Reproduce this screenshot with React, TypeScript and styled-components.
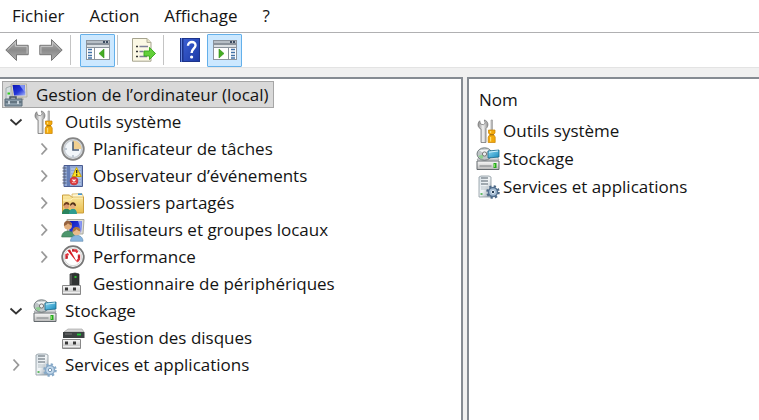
import React from "react";
import styled, { createGlobalStyle } from "styled-components";

const GlobalStyle = createGlobalStyle`
  * { box-sizing: border-box; }
  body { margin: 0; background: #fff; }
  body, button, table {
    font-family: "Open Sans", "Noto Sans", sans-serif;
    font-size: 17px;
    line-height: 24px;
    color: #141414;
  }
  button { margin: 0; padding: 0; border: 0; background: none; cursor: default; }
`;

const Window = styled.div`
  min-height: 100vh;
  display: flex;
  flex-direction: column;
  background: #f0f0f0;
`;

const MenuBar = styled.nav`
  display: flex;
  height: 33px;
  background: #fff;
  border-bottom: 1px solid #b0b0b2;
`;

const MenuItem = styled.button`
  padding: 0 13px 0 12px;
`;

const Toolbar = styled.div`
  display: flex;
  align-items: center;
  height: 35px;
  background: #fff;
  border-bottom: 1px solid #e3e3e3;
`;

const ToolButton = styled.button<{ $pressed?: boolean }>`
  width: ${(p) => (p.$pressed ? 35 : 34)}px;
  height: 33px;
  display: flex;
  align-items: center;
  justify-content: center;
  border: 1px solid ${(p) => (p.$pressed ? "#64b0ea" : "transparent")};
  border-radius: 1px;
  background: ${(p) => (p.$pressed ? "#cce8ff" : "transparent")};
`;

const Divider = styled.span`
  width: 1px;
  height: 30px;
  margin: 0 9px 0 2px;
  background: #c4c4c4;
`;

const Panes = styled.main`
  flex: 1;
  display: flex;
  gap: 4px;
  padding-top: 9px;
`;

const TreePane = styled.section`
  flex: 0 0 61%;
  padding: 2px 0;
  background: #fff;
  border-top: 2px solid #858b92;
  border-right: 2px solid #858b92;
`;

const ListPane = styled.section`
  flex: 1;
  padding: 6px 0 0 7px;
  background: #fff;
  border-top: 2px solid #858b92;
  border-left: 2px solid #858b92;
`;

const Tree = styled.ul`
  list-style: none;
  margin: 0;
  padding: 0;
`;

const Row = styled.div<{ $level: number }>`
  display: flex;
  align-items: center;
  height: 27px;
  padding-left: ${(p) => (p.$level ? p.$level * 28 - 23 : 2)}px;
`;

const Toggle = styled.button`
  display: flex;
  justify-content: center;
  width: 22px;
  margin-right: 6px;
`;

const ToggleSpace = styled.span`
  width: 28px;
`;

const Label = styled.button<{ $selected?: boolean }>`
  display: flex;
  align-items: center;
  gap: 8px;
  height: 27px;
  white-space: nowrap;
  ${(p) =>
    p.$selected &&
    `
      padding: 0 4px 0 1px;
      background: #d9d9d9;
      border: 1px solid #a6a6a6;
    `}
`;

const ItemTable = styled.table`
  border-collapse: collapse;
  th {
    height: 32px;
    padding: 0 0 2px 3px;
    text-align: left;
    font-weight: 400;
  }
  td { height: 28px; padding: 0; }
`;

const Item = styled.div`
  display: flex;
  align-items: center;
  gap: 3px;
  white-space: nowrap;
`;

const Glyph = styled.svg`
  display: block;
  flex: none;
`;

type IconProps = { children: React.ReactNode; width?: number; height?: number };
const Icon = ({ children, width = 24, height = 24 }: IconProps) => (
  <Glyph width={width} height={height} viewBox={`0 0 ${width} ${height}`} aria-hidden="true">
    {children}
  </Glyph>
);

const Gradients = () => (
  <Glyph width="0" height="0" aria-hidden="true">
    <defs>
      <linearGradient id="steel" x1="0" y1="0" x2="0" y2="1">
        <stop offset="0" stopColor="#b5b5b5" />
        <stop offset=".5" stopColor="#8b8b8b" />
        <stop offset="1" stopColor="#b0b0b0" />
      </linearGradient>
      <linearGradient id="metal" x1="0" y1="0" x2="1" y2="0">
        <stop offset="0" stopColor="#8c8c8c" />
        <stop offset=".5" stopColor="#f4f4f4" />
        <stop offset="1" stopColor="#8f8f8f" />
      </linearGradient>
      <linearGradient id="screen" x1="0" y1="0" x2="1" y2="1">
        <stop offset="0" stopColor="#0a16b4" />
        <stop offset=".55" stopColor="#2436d8" />
        <stop offset="1" stopColor="#a9b8fa" />
      </linearGradient>
      <linearGradient id="tower" x1="0" y1="0" x2="1" y2="1">
        <stop offset="0" stopColor="#d9e2e8" />
        <stop offset=".5" stopColor="#f2f5f7" />
        <stop offset="1" stopColor="#8d9aa5" />
      </linearGradient>
      <linearGradient id="help" x1="0" y1="0" x2="1" y2="1">
        <stop offset="0" stopColor="#3b5fd2" />
        <stop offset="1" stopColor="#1c3aa6" />
      </linearGradient>
      <linearGradient id="folder" x1="0" y1="0" x2="0" y2="1">
        <stop offset="0" stopColor="#fbe9a4" />
        <stop offset="1" stopColor="#e8bd4e" />
      </linearGradient>
      <linearGradient id="box" x1="0" y1="0" x2="0" y2="1">
        <stop offset="0" stopColor="#fafafa" />
        <stop offset="1" stopColor="#b9b9b9" />
      </linearGradient>
      <linearGradient id="cyan" x1="0" y1="0" x2="1" y2="1">
        <stop offset="0" stopColor="#8ed8f3" />
        <stop offset="1" stopColor="#168bbd" />
      </linearGradient>
    </defs>
  </Glyph>
);

const BackIcon = () => (
  <Icon>
    <path d="M.8 12 11.5 1.5v5.8h11.7v9.4H11.5v5.8Z" fill="url(#steel)" stroke="#777" />
    <path d="M2.5 12 10.4 4.2v4.2h11.7v7.2" fill="none" stroke="#c6c6c6" />
  </Icon>
);

const ForwardIcon = () => (
  <Icon>
    <path d="M23.2 12 12.5 1.5v5.8H.8v9.4h11.7v5.8Z" fill="url(#steel)" stroke="#777" />
    <path d="M21.5 12 13.6 4.2v4.2H1.9v7.2" fill="none" stroke="#c6c6c6" />
  </Icon>
);

const PaneIcon = ({ flipped }: { flipped?: boolean }) => (
  <Icon height={20}>
    <path d="M0 0h24v20H0z" fill="#8b939c" />
    <path d="M1 1h22v2H1z" fill="#b8bfc6" />
    <path d="M17 1h2v2h-2zM20 1h2v2h-2z" fill="#3b4b60" />
    <path d="M1 5h22v2H1z" fill="#dce0e3" />
    <path d={flipped ? "M1 8h14v11H1zM16 8h7v11h-7z" : "M1 8h7v11H1zM9 8h14v11H9z"} fill="#fff" />
    <path
      d={flipped ? "M18 9.5h4M18 12.5h4M18 15.5h4M18 18h4" : "M2 9.5h4M2 12.5h4M2 15.5h4M2 18h4"}
      stroke="#4272a6"
      strokeWidth="1.4"
    />
    <path d={flipped ? "m6 9 5 4.5L6 18Z" : "m18 9-5 4.5 5 4.5Z"} fill="#45ad24" stroke="#318f16" strokeWidth=".6" />
  </Icon>
);

const ExportIcon = () => (
  <Icon>
    <path d="M.5.5H15l4 4v18.7H.5Z" fill="#fbf8e4" stroke="#a5a38e" />
    <path d="M15 .5v4h4" fill="#e8e3c6" stroke="#b1ae98" />
    <path d="M4 8.5h2M4 13.5h2M4 18.5h2" stroke="#333" strokeWidth="1.6" />
    <path d="M7.5 8.5H16M7.5 13.5h4M7.5 18.5H15" stroke="#7d7f98" strokeWidth="1.4" />
    <path d="M12 13h5.5V9.4l6 6.1-6 6V18H12Z" fill="#62cf38" stroke="#35a61d" strokeWidth=".9" />
  </Icon>
);

const HelpIcon = () => (
  <Icon width={20}>
    <path d="M0 0h20v24H0z" fill="#1d348b" />
    <path d="M3.5 1H19v22H3.5z" fill="url(#help)" />
    <path d="M1.5 0v24" stroke="#6688df" />
    <path d="M8 7.8C8 2.6 16 2.8 15.5 7.6 15.2 10.7 11.6 11 11.6 15" fill="none" stroke="#fff" strokeWidth="2.4" />
    <circle cx="11.6" cy="19" r="1.6" fill="#fff" />
  </Icon>
);

const ComputerIcon = () => (
  <Icon>
    <path d="M2 5 7 3v13l-5 1Z" fill="#d5dddf" stroke="#8e999b" strokeWidth=".7" />
    <path d="M3.5 10.5h2.5" stroke="#33cc20" strokeWidth="2" />
    <path d="M7 1h15.5L23 14H9Z" fill="#dedbd0" stroke="#aaa798" strokeWidth=".8" />
    <path d="M8.5 2h12.2l.7 10.5H10Z" fill="url(#screen)" />
    <path d="m15.5 2 5.2 0 .5 8Z" fill="#8193f2" />
    <path d="m14 14 5 0 1 3h-6Z" fill="#bab8ad" />
    <path d="M6 16v-2h6v2" fill="none" stroke="#48545e" strokeWidth="1.5" />
    <path d="M1 16h17v7H1z" fill="#8799a6" stroke="#586b79" />
    <path d="M1.5 19h16" stroke="#43535f" />
    <path d="M5 18v3M14 18v3" stroke="#e3edf3" strokeWidth="1.5" />
  </Icon>
);

const ToolsIcon = () => (
  <Icon>
    <path
      d="M5 23.5V10C1.5 8.8 1.2 4.3 3.7 1.8L4.5 5l3 .8L9.2 4 8.3 1c4 .8 4.8 6.1 1.7 8.6v13.9Z"
      fill="url(#metal)"
      stroke="#777"
      strokeWidth=".8"
    />
    <path d="M15 1h1.5v11H15z" fill="#c5c5c5" stroke="#929292" strokeWidth=".6" />
    <path d="M12.5 11h6.5v3l-1.4 1.6L19.2 18v5.5h-7V18l1.6-2.4-1.3-1.6Z" fill="#f3aa0b" stroke="#c88100" strokeWidth=".7" />
    <path d="M14.6 12v2M14.6 18v4.5" stroke="#ffdb70" strokeWidth="1.2" />
    <path d="M13.8 15.8h4" stroke="#8f6413" />
  </Icon>
);

const ClockIcon = () => (
  <Icon>
    <circle cx="12" cy="12" r="10.8" fill="#d7dadd" stroke="#858585" strokeWidth="1.8" />
    <circle cx="12" cy="12" r="8.5" fill="#f2f6fa" stroke="#b0b8c0" strokeWidth=".7" />
    <path d="M12 12V3.5a8.5 8.5 0 0 1 8.5 8.5Z" fill="#f1cf90" />
    <path d="M12 4.5V13h6" fill="none" stroke="#4c5d75" strokeWidth="1.6" />
    <path d="M12 18v2M4 12h2" stroke="#91a1b2" />
  </Icon>
);

const EventIcon = () => (
  <Icon>
    <path d="M3 1.5h18.5v21H3z" fill="#92a9d4" stroke="#4b5c91" />
    <path d="M6 2h3v20H6z" fill="#647eb5" />
    <path d="M10 5h10M10 8h10M10 11h10M10 14h10M10 17h10M10 20h10" stroke="#c5d2ea" />
    <path d="M1.5 4h4M1.5 7h4M1.5 10h4M1.5 13h4M1.5 16h4M1.5 19h4" stroke="#555d70" strokeWidth="1.2" />
    <path d="m15.5 3.5 4.8 9h-9Z" fill="#ffe529" stroke="#cba400" />
    <path d="M15.7 6v3.3M15.7 10.3v1.4" stroke="#222" strokeWidth="1.3" />
    <circle cx="13" cy="17" r="4" fill="#df3f42" stroke="#b92c34" strokeWidth=".6" />
    <path d="m11.5 15.5 3 3m0-3-3 3" stroke="#fff" strokeWidth="1.1" />
  </Icon>
);

const FolderIcon = () => (
  <Icon>
    <path d="M1.5 4h7l2 2h12v16h-21Z" fill="url(#folder)" stroke="#ca9e3d" />
    <path d="m11 3 10-.5 1.5 3.5H11Z" fill="#fff7d3" stroke="#d2ad53" strokeWidth=".7" />
    <path d="M17 3.2h4" stroke="#3a91db" strokeWidth="1.5" />
    <path d="M2 9h8l2-2h10" fill="none" stroke="#fff2bd" />
    <path d="M1 23c0-7 9-7 9 0Z" fill="#29845f" />
    <path d="M8 23c0-7 8-7 8 0Z" fill="#2d9c91" />
    <circle cx="5.5" cy="15" r="2.8" fill="#dc9b70" />
    <path d="M2.5 15c0-5 6-5 6-1-2 0-3-1-3-1Z" fill="#6b3a1a" />
    <circle cx="11.8" cy="15" r="2.8" fill="#e4ad80" />
    <path d="M9 15c0-5 6-5 6 0-2 0-3-2-3-2Z" fill="#523017" />
  </Icon>
);

const UsersIcon = () => (
  <Icon>
    <path d="M6 1.5h17L22 16H7Z" fill="#deddd5" stroke="#a9a99e" />
    <path d="M8 3h13l-.8 11.5H8.5Z" fill="url(#screen)" />
    <path d="m17 3 4 0-.7 10Z" fill="#8998f2" />
    <path d="M.7 19c0-8 13-8 13 0Z" fill="#4d976e" stroke="#397350" strokeWidth=".6" />
    <circle cx="7" cy="7.5" r="4" fill="#e2af7d" />
    <path d="M3 8c-1-7 8-7 8-.5C9 7.5 8 6 7 5.3 6 7 4.3 7.2 3 8Z" fill="#95623e" />
    <path d="M9.5 23.3c0-8 12.5-8 12.5 0Z" fill="#86b5df" stroke="#6289ad" strokeWidth=".6" />
    <circle cx="15.5" cy="13.5" r="3.8" fill="#e9bc8e" />
    <path d="M11.7 14c-.6-7 7.8-6 7.6-.8-2 0-3-1.3-3.8-2-1 1.8-2.3 1.7-3.8 2.8Z" fill="#ad763c" />
  </Icon>
);

const PerformanceIcon = () => (
  <Icon>
    <circle cx="12" cy="12" r="10.8" fill="#f9f9f9" stroke="#777" strokeWidth="1.8" />
    <circle cx="12" cy="12" r="8.7" fill="#fff" stroke="#c6c6c6" strokeWidth=".7" />
    <path d="M5.5 14v-4l2-1M11 5.5h4l1.5 2M18 9.5V14l-2 2.5" fill="none" stroke="#e0303a" strokeWidth="2.4" />
    <path d="m6.5 5.5 2.5-1L16.5 18Z" fill="#d71920" />
    <path d="M5 12h2M12 4v2M17 12h2" stroke="#8e2026" />
  </Icon>
);

const Connector = () => (
  <>
    <path d="M1.5 13.5h18v9h-18Z" fill="url(#box)" stroke="#888" />
    <path d="M4 15.5h3v3H4zM12 15.5h3v3h-3z" fill="#383838" />
    <path d="M2 20.5h17" stroke="#eee" />
  </>
);

const DeviceIcon = () => (
  <Icon>
    <path d="m9 2 5-1 4 1v12H9Z" fill="#303333" stroke="#1f2222" strokeWidth=".7" />
    <path d="M10 2.5v10" stroke="#777" />
    <path d="M13.5 5h2" stroke="#2be82e" strokeWidth="1.5" />
    <Connector />
  </Icon>
);

const DiskManagerIcon = () => (
  <Icon>
    <path d="m3 6 4-3h14l2 3Z" fill="#d6d6d6" stroke="#999" strokeWidth=".6" />
    <path d="M2 6h21.5v6H2z" fill="#3c4142" />
    <path d="M4 8h7" stroke="#777" />
    <path d="M16 8.5h4" stroke="#1dc936" strokeWidth="1.8" />
    <Connector />
  </Icon>
);

const StorageIcon = () => (
  <Icon>
    <path d="m1 13 3-4h17l2 4Z" fill="#d9dcde" stroke="#8d9295" strokeWidth=".6" />
    <ellipse cx="8.5" cy="7" rx="7.5" ry="6.2" fill="#bfc5c7" stroke="#767f82" />
    <path d="M3 3 8.5 7 13 2.5" fill="#f1f4f4" />
    <path d="M2 9 8.5 7 6 12.5" fill="#8ecf91" />
    <circle cx="8.5" cy="7" r="2.1" fill="#edf0f1" stroke="#777" />
    <path d="m12 4 11-1v7l-11 1Z" fill="url(#cyan)" stroke="#1b6889" strokeWidth=".8" />
    <path d="M13 5.2 22 4" stroke="#cef2fc" />
    <path d="M1 14h22v8.5H1z" fill="url(#box)" stroke="#646a6e" />
    <path d="M3.5 19h12" stroke="#7a7f81" />
    <path d="M17.5 16h3v5h-3z" fill="#28aa20" />
    <path d="M18.3 17v3" stroke="#9af06f" />
  </Icon>
);

const ServicesIcon = ({ pale }: { pale?: boolean }) => (
  <Icon>
    <path d="m3 2 2-1h8l2 1v20H3Z" fill="url(#tower)" stroke="#8c989f" strokeWidth=".8" />
    <path d="M5 3h7M5 6h7M5 9h7" stroke="#56636c" strokeWidth="1.2" />
    <path d="M5 12h7M5 14h7" stroke="#b8c2c8" />
    <path d="M4.5 19h2" stroke="#42af45" strokeWidth="1.6" />
    <circle cx="17" cy="17" r="5.6" fill="none" stroke={pale ? "#86a9c8" : "#4d6986"} strokeWidth="2.4" strokeDasharray="2.2 2.2" />
    <circle cx="17" cy="17" r="4.5" fill={pale ? "#c2d8eb" : "#a5bdd4"} stroke={pale ? "#87a8c7" : "#526f8e"} strokeWidth="1.4" />
    <circle cx="17" cy="17" r="1.7" fill={pale ? "#fff" : "#263d55"} stroke={pale ? "#7898b5" : "#dce7f1"} />
  </Icon>
);

const Chevron = ({ open }: { open?: boolean }) => (
  <Icon width={14} height={14}>
    <path d={open ? "m1.5 4.5 5.5 5 5.5-5" : "m4.5 1.5 5 5.5-5 5.5"} fill="none" stroke={open ? "#333" : "#999"} strokeWidth="1.8" />
  </Icon>
);

type Node = { label: string; icon: React.ReactNode; level: number; state?: "open" | "closed"; selected?: boolean };

const nodes: Node[] = [
  { label: "Gestion de l’ordinateur (local)", icon: <ComputerIcon />, level: 0, selected: true },
  { label: "Outils système", icon: <ToolsIcon />, level: 1, state: "open" },
  { label: "Planificateur de tâches", icon: <ClockIcon />, level: 2, state: "closed" },
  { label: "Observateur d’événements", icon: <EventIcon />, level: 2, state: "closed" },
  { label: "Dossiers partagés", icon: <FolderIcon />, level: 2, state: "closed" },
  { label: "Utilisateurs et groupes locaux", icon: <UsersIcon />, level: 2, state: "closed" },
  { label: "Performance", icon: <PerformanceIcon />, level: 2, state: "closed" },
  { label: "Gestionnaire de périphériques", icon: <DeviceIcon />, level: 2 },
  { label: "Stockage", icon: <StorageIcon />, level: 1, state: "open" },
  { label: "Gestion des disques", icon: <DiskManagerIcon />, level: 2 },
  { label: "Services et applications", icon: <ServicesIcon pale />, level: 1, state: "closed" },
];

const items = [
  { label: "Outils système", icon: <ToolsIcon /> },
  { label: "Stockage", icon: <StorageIcon /> },
  { label: "Services et applications", icon: <ServicesIcon /> },
];

export default function App() {
  return (
    <Window>
      <GlobalStyle />
      <MenuBar>
        {["Fichier", "Action", "Affichage", "?"].map((name) => (
          <MenuItem key={name}>{name}</MenuItem>
        ))}
      </MenuBar>
      <Toolbar role="toolbar">
        <ToolButton aria-label="Précédent"><BackIcon /></ToolButton>
        <ToolButton aria-label="Suivant"><ForwardIcon /></ToolButton>
        <Divider />
        <ToolButton $pressed aria-pressed="true" aria-label="Arborescence"><PaneIcon /></ToolButton>
        <Divider />
        <ToolButton aria-label="Exporter la liste"><ExportIcon /></ToolButton>
        <Divider />
        <ToolButton aria-label="Aide"><HelpIcon /></ToolButton>
        <ToolButton $pressed aria-pressed="true" aria-label="Volet Actions"><PaneIcon flipped /></ToolButton>
      </Toolbar>
      <Panes>
        <TreePane>
          <Tree role="tree">
            {nodes.map((node) => (
              <li
                key={node.label}
                role="treeitem"
                aria-level={node.level + 1}
                aria-selected={!!node.selected}
                aria-expanded={node.state ? node.state === "open" : undefined}
              >
                <Row $level={node.level}>
                  {node.state && (
                    <Toggle aria-label={node.label}><Chevron open={node.state === "open"} /></Toggle>
                  )}
                  {!node.state && node.level > 0 && <ToggleSpace />}
                  <Label $selected={node.selected}>{node.icon}{node.label}</Label>
                </Row>
              </li>
            ))}
          </Tree>
        </TreePane>
        <ListPane>
          <ItemTable>
            <thead><tr><th scope="col">Nom</th></tr></thead>
            <tbody>
              {items.map((item) => (
                <tr key={item.label}><td><Item>{item.icon}{item.label}</Item></td></tr>
              ))}
            </tbody>
          </ItemTable>
        </ListPane>
      </Panes>
      <Gradients />
    </Window>
  );
}
